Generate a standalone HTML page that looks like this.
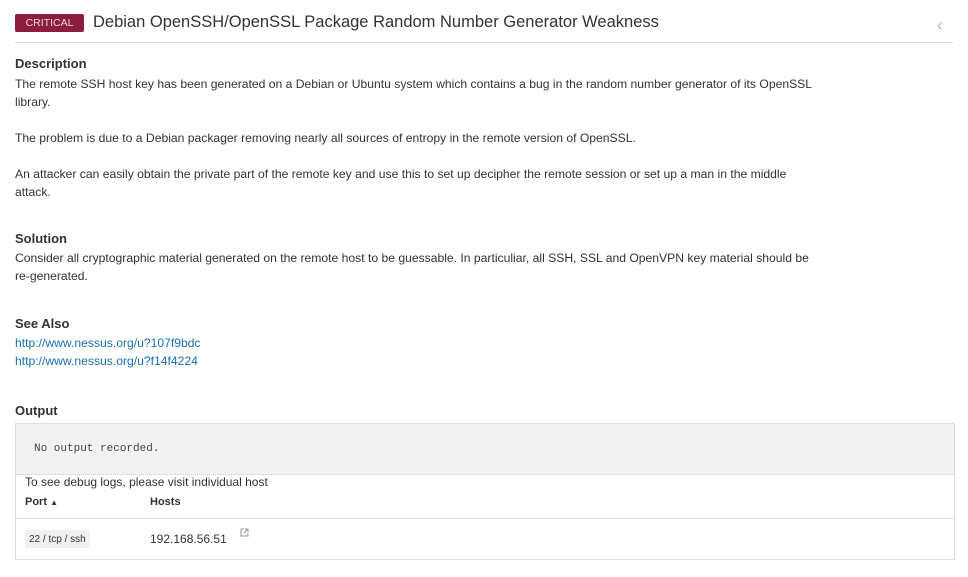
<!DOCTYPE html>
<html><head><style>
body{margin:0;width:968px;height:577px;background:#fff;font-family:"Liberation Sans",sans-serif;color:#333;position:relative;overflow:hidden}
.a{position:absolute;white-space:nowrap}
p{margin:0}
.t{font-size:12.15px;line-height:18px}
h3{font-size:13px;font-weight:bold;margin:0;position:absolute;color:#333}
a{color:#1a6fb5;text-decoration:none}
</style></head><body>
<div class="a" style="left:15px;top:14px;width:69px;height:18px;background:#8c1d3d;border-radius:2px;color:#f0d8de;font-size:10.5px;line-height:18px;text-align:center">CRITICAL</div>
<div class="a" style="left:93px;top:13px;font-size:16.5px;color:#333">Debian OpenSSH/OpenSSL Package Random Number Generator Weakness</div>
<div class="a" style="left:937px;top:15px;font-size:18px;color:#bbb">&#8249;</div>
<div class="a" style="left:15px;top:42px;width:938px;height:1px;background:#ddd"></div>
<h3 style="left:15px;top:56px">Description</h3>
<div class="a t" style="left:15px;top:75px">The remote SSH host key has been generated on a Debian or Ubuntu system which contains a bug in the random number generator of its OpenSSL<br>library.<br><br>The problem is due to a Debian packager removing nearly all sources of entropy in the remote version of OpenSSL.<br><br>An attacker can easily obtain the private part of the remote key and use this to set up decipher the remote session or set up a man in the middle<br>attack.</div>
<h3 style="left:15px;top:231px">Solution</h3>
<div class="a t" style="left:15px;top:249px">Consider all cryptographic material generated on the remote host to be guessable. In particuliar, all SSH, SSL and OpenVPN key material should be<br>re-generated.</div>
<h3 style="left:15px;top:316px">See Also</h3>
<div class="a t" style="left:15px;top:334px"><a>http://www.nessus.org/u?107f9bdc</a><br><a>http://www.nessus.org/u?f14f4224</a></div>
<h3 style="left:15px;top:403px">Output</h3>
<div class="a" style="left:15px;top:423px;width:938px;height:135px;border:1px solid #ddd"></div>
<div class="a" style="left:16px;top:424px;width:938px;height:50px;background:#f2f2f2;border-bottom:1px dotted #ccc"></div>
<div class="a" style="left:34px;top:443px;font-family:'Liberation Mono',monospace;font-size:11px;color:#444">No output recorded.</div>
<div class="a" style="left:25px;top:475px;font-size:12px">To see debug logs, please visit individual host</div>
<div class="a" style="left:25px;top:496px;font-size:11px;font-weight:bold">Port <span style="font-size:8px">&#9650;</span></div>
<div class="a" style="left:150px;top:496px;font-size:11px;font-weight:bold">Hosts</div>
<div class="a" style="left:16px;top:518px;width:938px;height:1px;background:#ddd"></div>
<div class="a" style="left:25px;top:530px;padding:0 4px;height:18px;line-height:19px;background:#f0f0f0;border-radius:2px;font-size:10px">22 / tcp / ssh</div>
<div class="a" style="left:150px;top:532px;font-size:12px">192.168.56.51</div>
<svg class="a" style="left:240px;top:528px" width="9" height="9" viewBox="0 0 9 9"><path d="M4 1H1v7h7V5" fill="none" stroke="#999"/><path d="M5 1h3v3M8 1L4 5" fill="none" stroke="#999"/></svg>
</body></html>
